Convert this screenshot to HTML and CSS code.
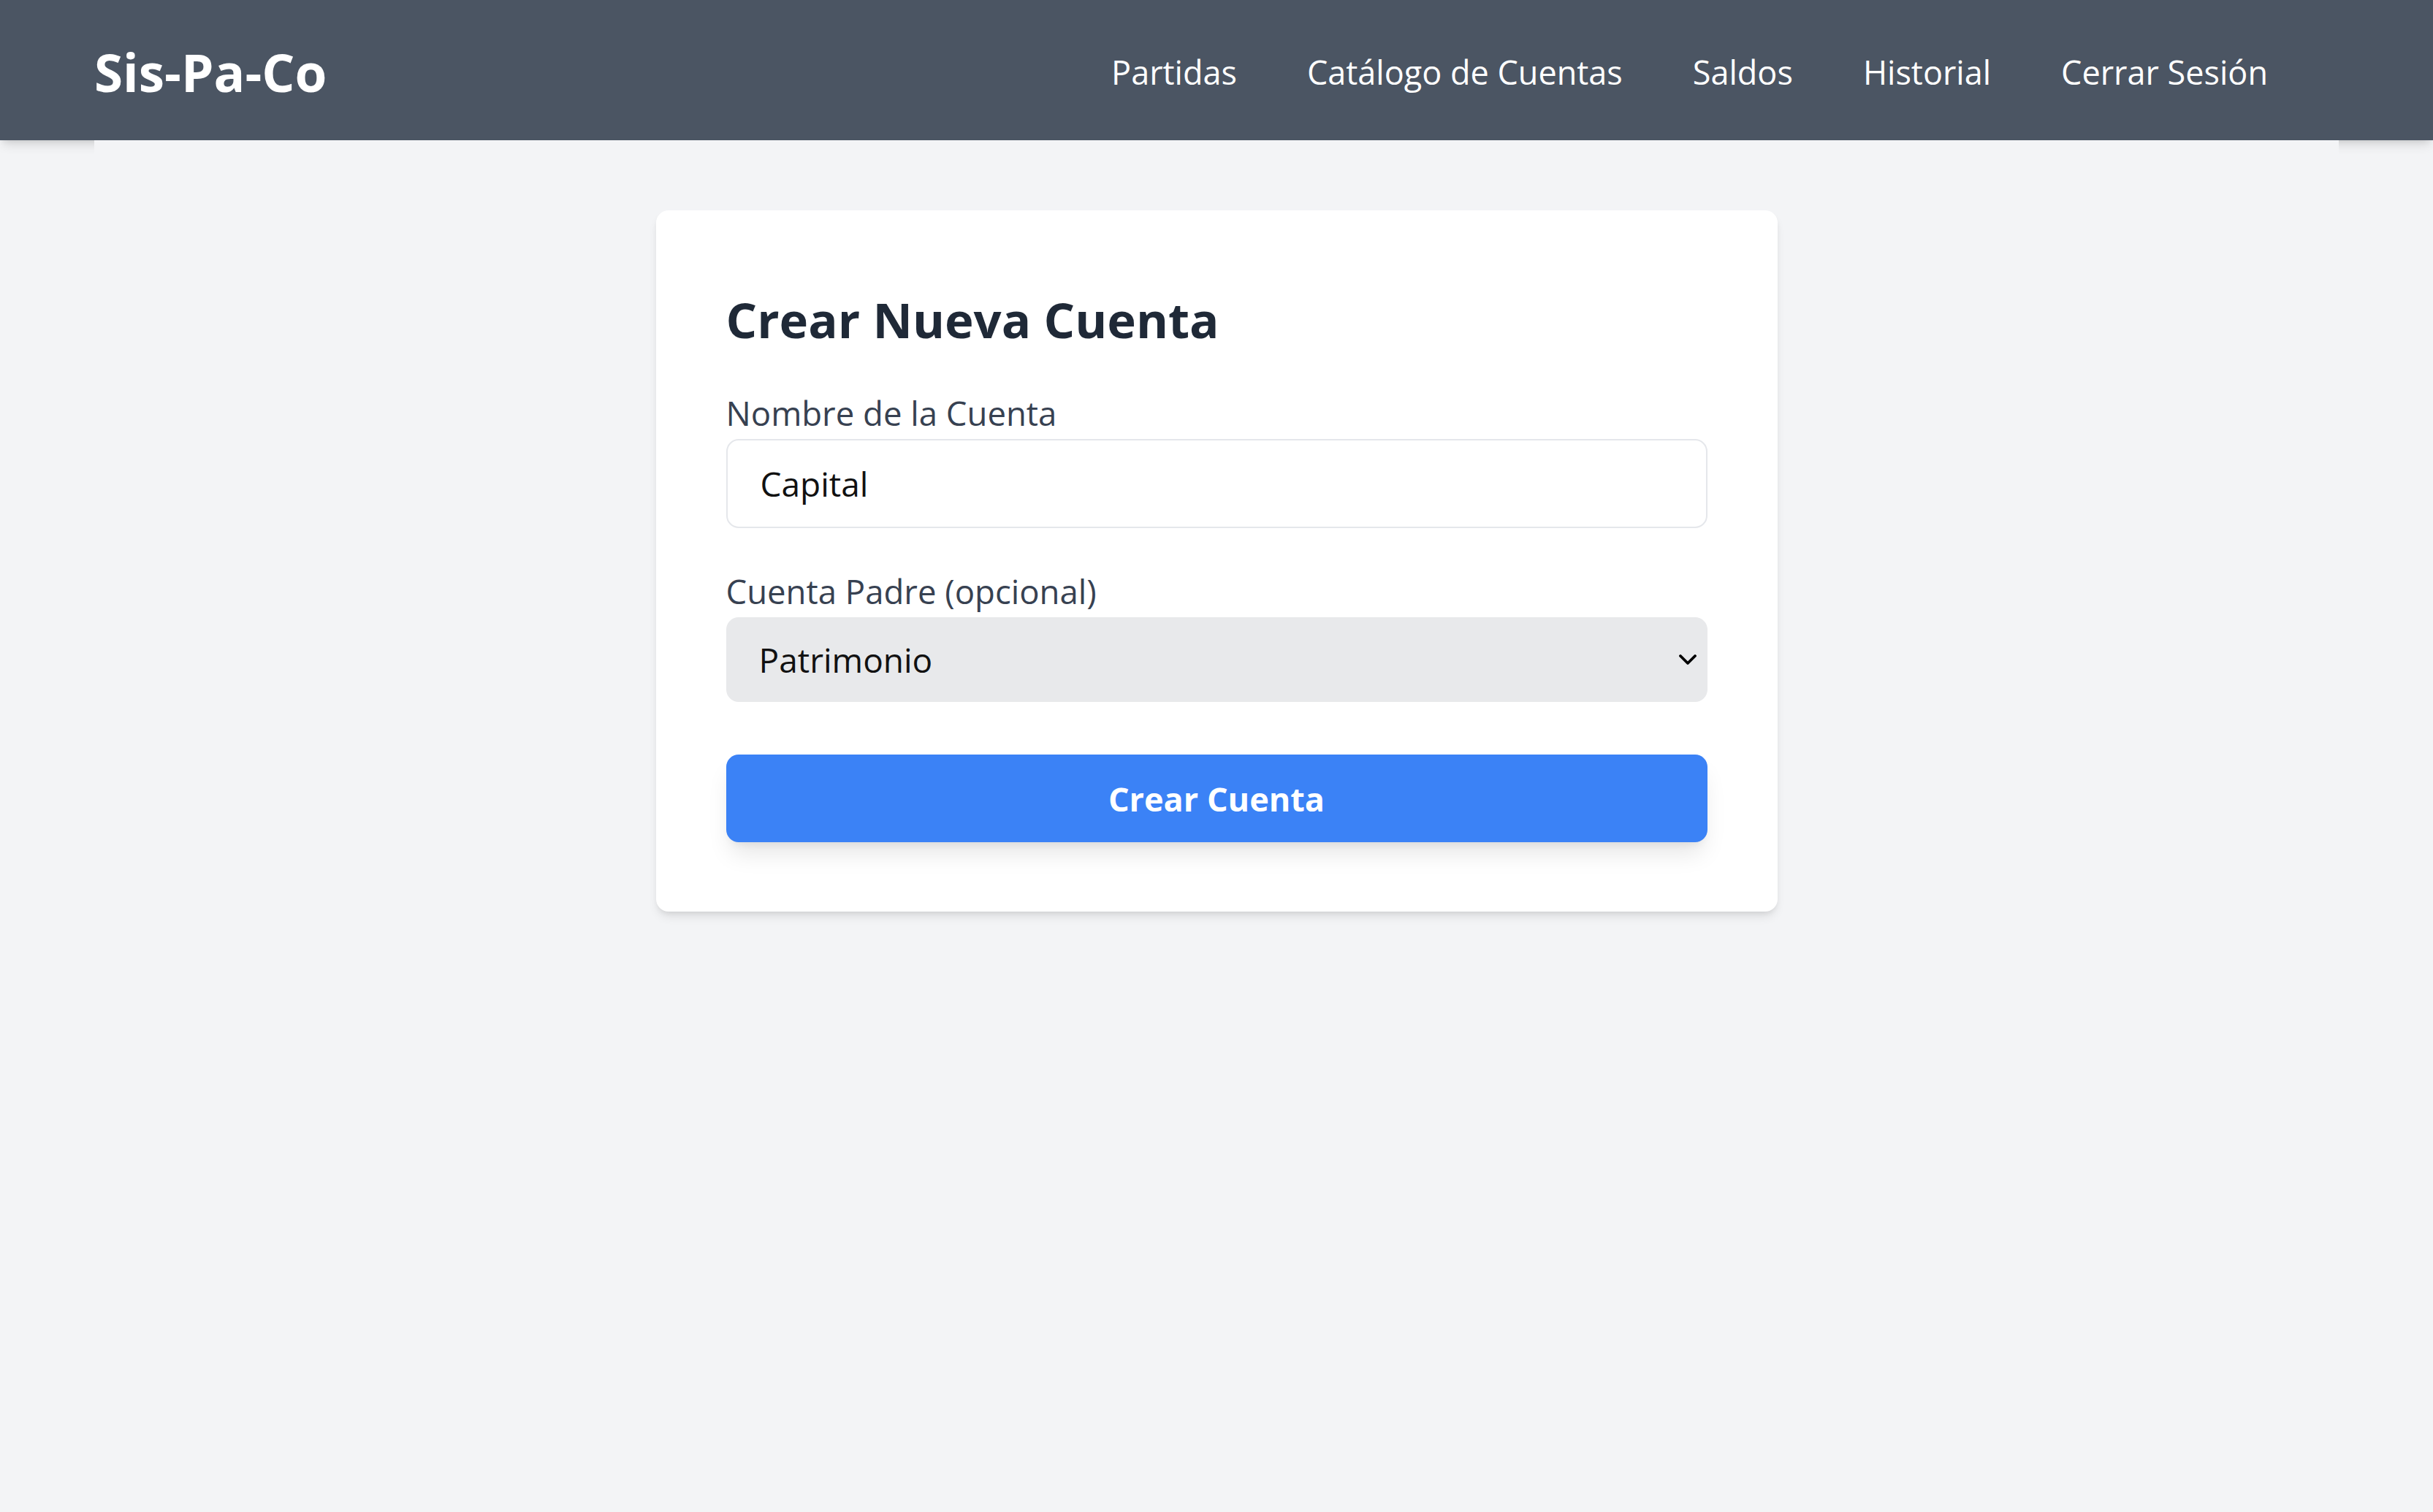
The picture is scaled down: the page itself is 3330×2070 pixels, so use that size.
FILE: index.html
```html
<!DOCTYPE html>
<html lang="es">
<head>
<meta charset="utf-8">
<title>Sis-Pa-Co</title>
<link rel="stylesheet" href="styles.css">
</head>
<body>
<header class="topbar">
  <div class="topbar-inner">
    <div class="logo">Sis-Pa-Co</div>
    <nav class="nav">
      <a href="#">Partidas</a>
      <a href="#">Catálogo de Cuentas</a>
      <a href="#">Saldos</a>
      <a href="#">Historial</a>
      <a href="#">Cerrar Sesión</a>
    </nav>
  </div>
</header>
<main class="main">
  <section class="card">
    <h1 class="card-title">Crear Nueva Cuenta</h1>
    <div class="field">
      <label class="label" for="nombre">Nombre de la Cuenta</label>
      <input class="input" id="nombre" type="text" value="Capital">
    </div>
    <div class="field field-last">
      <label class="label" for="padre">Cuenta Padre (opcional)</label>
      <div class="select-wrap">
        <select class="select" id="padre">
          <option>Patrimonio</option>
        </select>
        <svg class="chevron" viewBox="0 0 24 16" width="24" height="16"><path d="M2 3l10 10L22 3" fill="none" stroke="#000" stroke-width="3.8" stroke-linecap="round" stroke-linejoin="round"/></svg>
      </div>
    </div>
    <button class="btn" type="button">Crear Cuenta</button>
  </section>
</main>
</body>
</html>
```
FILE: styles.css
```css
html, body {
  margin: 0;
  padding: 0;
}
body {
  background: #f3f4f6;
  font-family: "Open Sans", "Noto Sans", sans-serif;
  min-height: 2070px;
}
.topbar {
  height: 192px;
  background: #4b5563;
  box-shadow: 0 10px 14px -4px rgba(0, 0, 0, 0.12), 0 4px 8px -4px rgba(0, 0, 0, 0.1);
}
.topbar-inner {
  width: 3072px;
  height: 100%;
  margin: 0 auto;
  box-sizing: border-box;
  padding: 4px 97px 0 0;
  display: flex;
  align-items: center;
  justify-content: space-between;
}
.logo {
  color: #fff;
  font-weight: 700;
  font-size: 71px;
}
.nav {
  display: flex;
  gap: 96px;
}
.nav a {
  color: #fff;
  text-decoration: none;
  font-size: 45px;
}
.main {
  width: 3072px;
  margin: 0 auto;
  background: #f3f4f6;
  padding-top: 96px;
}
.card {
  width: 1535px;
  box-sizing: border-box;
  margin: 0 auto;
  background: #fff;
  border-radius: 17px;
  padding: 96px 96px 95px;
  box-shadow: 0 9px 14px -3px rgba(0, 0, 0, 0.1), 0 4px 8px -4px rgba(0, 0, 0, 0.1);
}
.card-title {
  margin: 0 0 44px;
  font-size: 67px;
  line-height: 106px;
  font-weight: 700;
  color: #1f2937;
}
.field {
  margin-bottom: 55px;
}
.field-last {
  margin-bottom: 72px;
}
.label {
  display: block;
  font-size: 45.5px;
  line-height: 62px;
  color: #374151;
  margin-bottom: 5px;
}
.input {
  display: block;
  width: 100%;
  box-sizing: border-box;
  height: 122px;
  border: 2px solid #e5e7eb;
  border-radius: 17px;
  padding: 0 45px;
  font-family: inherit;
  font-size: 46px;
  color: #111;
  background: #fff;
  outline: none;
}
.select-wrap {
  position: relative;
}
.select {
  display: block;
  width: 100%;
  box-sizing: border-box;
  height: 116px;
  border: none;
  border-radius: 17px;
  padding: 0 45px;
  font-family: inherit;
  font-size: 46px;
  color: #111;
  background: #e8e9eb;
  appearance: none;
  -webkit-appearance: none;
  outline: none;
}
.chevron {
  position: absolute;
  right: 15px;
  top: 50px;
  pointer-events: none;
}
.btn {
  display: block;
  width: 100%;
  height: 120px;
  border: none;
  border-radius: 17px;
  background: #3b82f6;
  color: #fff;
  font-family: inherit;
  font-weight: 700;
  font-size: 45px;
  box-shadow: 0 21px 32px -6px rgba(0, 0, 0, 0.1), 0 8px 13px -8px rgba(0, 0, 0, 0.1);
  cursor: pointer;
}
```
